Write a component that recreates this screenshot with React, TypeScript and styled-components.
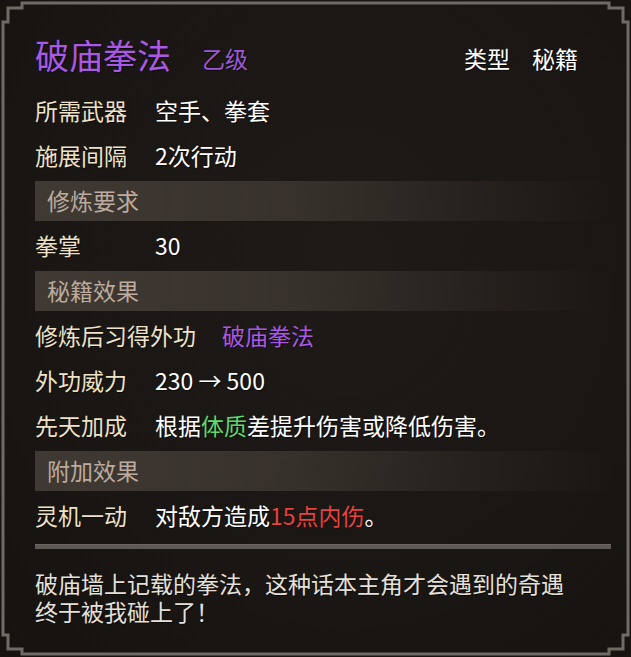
import React from "react";
import styled, { createGlobalStyle } from "styled-components";

const Global = createGlobalStyle`
  html, body { margin: 0; padding: 0; background: #141110; }
  * { box-sizing: border-box; }
`;

const FONT = `"Noto Sans CJK SC", "Noto Sans", sans-serif`;

const Panel = styled.div`
  position: relative;
  width: 631px;
  height: 657px;
  padding: 35px 18px 0 35px;
  background: radial-gradient(ellipse at 55% 40%, #1e1a17 0%, #1a1613 60%, #161210 100%);
  font-family: ${FONT};
  overflow: hidden;
`;

const Frame = styled.svg`
  position: absolute;
  left: 0;
  top: 0;
  pointer-events: none;
`;

const Header = styled.div`
  display: flex;
  align-items: center;
  height: 40px;
  margin-bottom: 13px;
  padding-right: 35px;
`;

const Title = styled.span`
  font-size: 34px;
  line-height: 1;
  color: #aa58e6;
  text-shadow: 1px 1px 0 #0c0a09;
`;

const Grade = styled.span`
  font-size: 23px;
  line-height: 1;
  color: #9c58d8;
  margin-left: 31px;
  margin-top: 6px;
  text-shadow: 1px 1px 0 #0c0a09;
`;

const TypeInfo = styled.div`
  margin-left: auto;
  display: flex;
  gap: 22px;
  font-size: 23px;
  line-height: 1;
  color: #ffffff;
  margin-top: 6px;
  text-shadow: 1px 1px 0 #0c0a09;
`;

const Row = styled.div`
  display: flex;
  align-items: center;
  height: 45px;
  font-size: 23px;
  line-height: 1;
  text-shadow: 1px 1px 0 #0c0a09;
`;

const Label = styled.span`
  min-width: 94px;
  margin-right: 26px;
  color: #eee2c7;
  white-space: nowrap;
`;

const Value = styled.span<{ $tone?: "purple" }>`
  color: ${(p) => (p.$tone === "purple" ? "#aa58e6" : "#ffffff")};
  white-space: nowrap;
`;

const Hl = styled.span<{ $c: string }>`
  color: ${(p) => p.$c};
`;

const BandRow = styled.div`
  height: 45px;
  display: flex;
  align-items: center;
`;

const Band = styled.div`
  flex: 1;
  height: 40px;
  display: flex;
  align-items: center;
  padding-left: 12px;
  font-size: 23px;
  line-height: 1;
  color: #bcab9e;
  background: linear-gradient(
    90deg,
    rgba(88, 80, 72, 0.62) 0%,
    rgba(80, 72, 64, 0.52) 45%,
    rgba(70, 62, 56, 0.25) 75%,
    rgba(60, 54, 48, 0) 100%
  );
`;

const Divider = styled.div`
  margin-top: 6px;
  margin-right: 2px;
  height: 5px;
  background: #5d5853;
  border-top: 1px solid #6a655f;
`;

const Desc = styled.div`
  margin-top: 20px;
  font-size: 23px;
  color: #e4e0da;
  text-shadow: 1px 1px 0 #0c0a09;
`;

const DescLine = styled.div`
  height: 28px;
  line-height: 28px;
  white-space: nowrap;
`;

const W = 631;
const H = 657;

const framePath =
  [
    [22, 3], [W - 22, 3], [W - 22, 8], [W - 8, 8], [W - 8, 22], [W - 3, 22],
    [W - 3, H - 22], [W - 8, H - 22], [W - 8, H - 8], [W - 22, H - 8], [W - 22, H - 3],
    [22, H - 3], [22, H - 8], [8, H - 8], [8, H - 22], [3, H - 22],
    [3, 22], [8, 22], [8, 8], [22, 8],
  ]
    .map((p, i) => `${i === 0 ? "M" : "L"}${p[0]} ${p[1]}`)
    .join(" ") + " Z";

export default function App() {
  return (
    <>
      <Global />
      <Panel>
        <Frame width={W} height={H} viewBox={`0 0 ${W} ${H}`}>
          <path d={framePath} fill="none" stroke="#6f6a64" strokeWidth={3} />
        </Frame>
        <Header>
          <Title>破庙拳法</Title>
          <Grade>乙级</Grade>
          <TypeInfo>
            <span>类型</span>
            <span>秘籍</span>
          </TypeInfo>
        </Header>
        <Row>
          <Label>所需武器</Label>
          <Value>空手、拳套</Value>
        </Row>
        <Row>
          <Label>施展间隔</Label>
          <Value>2次行动</Value>
        </Row>
        <BandRow>
          <Band>修炼要求</Band>
        </BandRow>
        <Row>
          <Label>拳掌</Label>
          <Value>30</Value>
        </Row>
        <BandRow>
          <Band>秘籍效果</Band>
        </BandRow>
        <Row>
          <Label>修炼后习得外功</Label>
          <Value $tone="purple">破庙拳法</Value>
        </Row>
        <Row>
          <Label>外功威力</Label>
          <Value>230 → 500</Value>
        </Row>
        <Row>
          <Label>先天加成</Label>
          <Value>
            根据<Hl $c="#5fd96b">体质</Hl>差提升伤害或降低伤害。
          </Value>
        </Row>
        <BandRow>
          <Band>附加效果</Band>
        </BandRow>
        <Row>
          <Label>灵机一动</Label>
          <Value>
            对敌方造成<Hl $c="#e9423c">15点内伤</Hl>。
          </Value>
        </Row>
        <Divider />
        <Desc>
          <DescLine>破庙墙上记载的拳法，这种话本主角才会遇到的奇遇</DescLine>
          <DescLine>终于被我碰上了！</DescLine>
        </Desc>
      </Panel>
    </>
  );
}
